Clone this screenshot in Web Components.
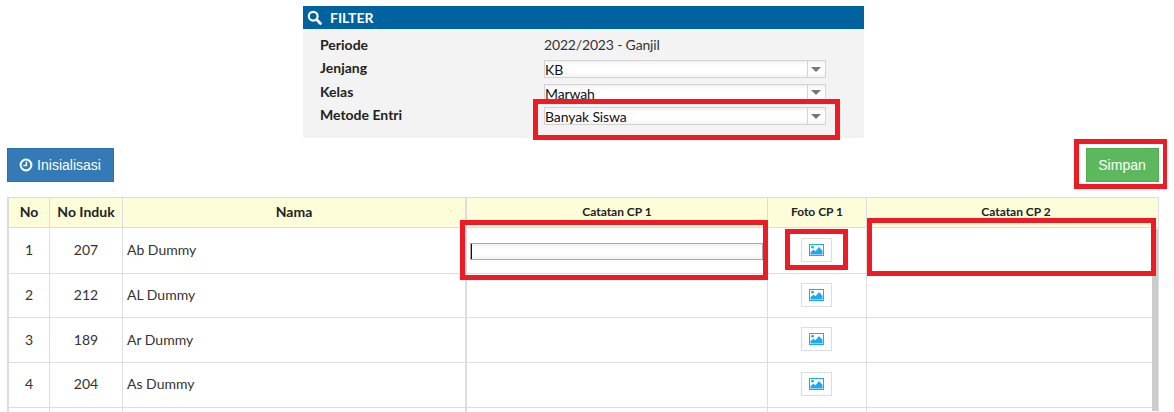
<!DOCTYPE html>
<html>
<head>
<meta charset="utf-8">
<title>Entri Catatan CP</title>
<style>
    html, body { margin: 0; height: 100%; overflow: hidden; background: #fff; }
    body { font-family: "Lato", "Liberation Sans", sans-serif; font-size: 14px; color: #222; }
</style>
</head>
<body>
<entri-page></entri-page>

<script>
    // Dropdown in the filter panel
    customElements.define('filter-select', class extends HTMLElement {
        constructor() {
            super();
            this.attachShadow({ mode: 'open' }).innerHTML = `
                <style>
                    :host { display: flex; width: 282px; height: 18px; box-sizing: border-box; border: 1px solid #d3d3d3;
                        background: linear-gradient(#f1f1f1, #fff 30%, #fff 70%, #f4f4f4); overflow: hidden; }
                    .val { flex: 1; font-size: 14px; line-height: 18px; color: #111; letter-spacing: -.12px; }
                    .arrow { width: 17px; border-left: 1px solid #d3d3d3; display: flex; align-items: center; justify-content: center; }
                    .arrow i { width: 0; height: 0; border: 5px solid transparent; border-top: 5px solid #777; border-bottom: 0; margin-right: 1px; }
                </style>
                <div class="val"><slot></slot></div>
                <div class="arrow"><i></i></div>`;
        }
    });

    customElements.define('filter-panel', class extends HTMLElement {
        constructor() {
            super();
            this.attachShadow({ mode: 'open' }).innerHTML = `
                <style>
                    :host { display: block; width: 561px; height: 132px; margin: 0 auto; background: #f3f3f3; }
                    .head { height: 23px; background: #00629f; color: #fff; font-weight: 700; font-size: 14px;
                        display: flex; align-items: center; gap: 8px; padding-left: 4px; }
                    .head svg { display: block; }
                    .body { display: grid; grid-template-columns: 224px 1fr; padding: 5px 0 0 17px; grid-auto-rows: 23.5px; align-items: center; }
                    .lbl { font-weight: 700; color: #222; line-height: 17px; margin-top: -2px; }
                    .lbl.up { margin-top: -4px; }
                    .val { color: #333; line-height: 17px; margin-top: -2px; letter-spacing: -.17px; }
                </style>
                <div class="head">
                    <svg width="15" height="15" viewBox="0 0 15 15"><circle cx="6.2" cy="6.2" r="4.4" fill="none" stroke="#fff" stroke-width="2.2"/><path d="M9.6 9.6l3.8 3.8" stroke="#fff" stroke-width="2.8" stroke-linecap="round"/></svg>
                    <span>FILTER</span>
                </div>
                <div class="body">
                    <div class="lbl">Periode</div><div class="val">2022/2023 - Ganjil</div>
                    <div class="lbl up">Jenjang</div><filter-select>KB</filter-select>
                    <div class="lbl">Kelas</div><filter-select>Marwah</filter-select>
                    <div class="lbl up">Metode Entri</div><filter-select>Banyak Siswa</filter-select>
                </div>`;
        }
    });

    // Flat bootstrap style button
    customElements.define('flat-button', class extends HTMLElement {
        constructor() {
            super();
            const bg = this.getAttribute('color') || '#337ab7';
            this.attachShadow({ mode: 'open' }).innerHTML = `
                <style>
                    :host { display: inline-flex; align-items: center; justify-content: center; gap: 4px; box-sizing: border-box; height: 34px;
                        background: ${bg}; border: 1px solid rgba(0,0,0,.08); color: #fff; padding-right: 1px;
                        font-family: "Liberation Sans", sans-serif; font-size: 14px; }
                </style>
                <slot></slot>`;
        }
    });

    customElements.define('foto-button', class extends HTMLElement {
        constructor() {
            super();
            this.attachShadow({ mode: 'open' }).innerHTML = `
                <style>
                    :host { display: flex; align-items: center; justify-content: center; width: 31px; height: 24px; box-sizing: border-box;
                        border: 1px solid #ddd; background: #fff; margin-right: 1px; }
                    svg { display: block; }
                </style>
                <svg width="15" height="12" viewBox="0 0 15 12">
                    <rect x=".5" y=".5" width="14" height="11" fill="#fff" stroke="#1eaaf1"/>
                    <circle cx="3.5" cy="3.2" r="1.4" fill="#1eaaf1"/>
                    <path d="M1.5 10.5V8l3-2.2 2 1.4 3.5-4.2 3.5 3.8v3.7z" fill="#1eaaf1"/>
                </svg>`;
        }
    });

    customElements.define('siswa-table', class extends HTMLElement {
        constructor() {
            super();
            const rows = [
                ['1', '207', 'Ab Dummy', 46],
                ['2', '212', 'AL Dummy', 44],
                ['3', '189', 'Ar Dummy', 45],
                ['4', '204', 'As Dummy', 44.5]
            ];
            const rowHtml = rows.map((r, i) => `
                <div class="row" style="height:${r[3]}px">
                    <div class="c mid">${r[0]}</div>
                    <div class="c mid">${r[1]}</div>
                    <div class="c name">${r[2]}</div>
                    <div class="c wide">${i === 0 ? '<div class="entry"></div>' : ''}</div>
                    <div class="c mid"><foto-button></foto-button></div>
                    <div class="c"></div>
                </div>`).join('');
            this.attachShadow({ mode: 'open' }).innerHTML = `
                <style>
                    :host { display: block; position: relative; margin: 0 8px 0 7px; box-sizing: border-box; border-top: 1px solid #ddd;
                        border-left: 2px solid #ddd; border-right: 1px solid #ddd; }
                    .row { display: grid; grid-template-columns: 41px 73px 344px 301px 99px 1fr; height: 44.5px; box-sizing: border-box; border-bottom: 1px solid #ddd; color: #333; }
                    .row.head { height: 30px; background: #fdfdd9; font-weight: 700; color: #222; }
                    .c { display: flex; align-items: center; border-right: 1px solid #ddd; box-sizing: border-box; min-width: 0; padding-bottom: 2px; }
                    .c:last-child { border-right: 0; }
                    .mid { justify-content: center; }
                    .name { padding-left: 4px; border-right-width: 2px; }
                    .wide { padding: 0 4px 0 3px; }
                    .small { font-size: 12px; }
                    .small.shift { padding-left: 7px; }
                    .head .name { justify-content: center; padding: 0 0 2px; }
                    .entry { flex: 1; height: 17px; box-sizing: border-box; border: 1px solid #aaa; position: relative; top: 1px;
                        background: linear-gradient(#f1f1f1, #fff 35%, #fff 65%, #f3f3f3); }
                    .entry::before { content: ""; position: absolute; left: 0; top: 0; bottom: 0; width: 1px; background: #111; }
                    .bar { position: absolute; right: 0; top: 31px; width: 6px; height: 182px; background: #ccc; }
                </style>
                <div class="row head">
                    <div class="c mid">No</div>
                    <div class="c mid">No Induk</div>
                    <div class="c name">Nama</div>
                    <div class="c mid small">Catatan CP 1</div>
                    <div class="c mid small">Foto CP 1</div>
                    <div class="c mid small shift">Catatan CP 2</div>
                </div>
                ${rowHtml}
                <div class="row">
                    <div class="c"></div><div class="c"></div><div class="c name"></div><div class="c"></div><div class="c"></div><div class="c"></div>
                </div>
                <div class="bar"></div>`;
        }
    });

    // Red annotation frame drawn over the screenshot
    customElements.define('red-mark', class extends HTMLElement {
        constructor() {
            super();
            const [x, y, w, h] = this.getAttribute('box').split(',');
            this.attachShadow({ mode: 'open' }).innerHTML = `
                <style>
                    :host { position: absolute; left: ${x}px; top: ${y}px; width: ${w}px; height: ${h}px;
                        box-sizing: border-box; border: 5px solid #ed1c24; pointer-events: none; }
                </style>`;
        }
    });

    customElements.define('entri-page', class extends HTMLElement {
        constructor() {
            super();
            this.attachShadow({ mode: 'open' }).innerHTML = `
                <style>
                    :host { display: block; position: relative; width: 1167px; height: 412px; padding-top: 6px; box-sizing: border-box; overflow: hidden; }
                    .tools { display: flex; justify-content: space-between; padding: 10px 8px 15px 7px; }
                    #init { width: 107px; }
                    #save { width: 73px; }
                    svg { display: block; }
                </style>
                <filter-panel></filter-panel>
                <div class="tools">
                    <flat-button id="init" color="#337ab7">
                        <svg width="14" height="14" viewBox="0 0 14 14"><circle cx="7" cy="7" r="5.4" fill="none" stroke="#fff" stroke-width="2"/><path d="M7.4 3.6v3.9H4.4" fill="none" stroke="#fff" stroke-width="1.4"/></svg>
                        <span>Inisialisasi</span>
                    </flat-button>
                    <flat-button id="save" color="#5cb85c">Simpan</flat-button>
                </div>
                <siswa-table></siswa-table>
                <red-mark box="533,99,307,41"></red-mark>
                <red-mark box="1074,139,94,50"></red-mark>
                <red-mark box="460,220,308,60"></red-mark>
                <red-mark box="785,229,63,41"></red-mark>
                <red-mark box="867,218,289,58"></red-mark>`;
        }
    });
</script>
</body>
</html>
